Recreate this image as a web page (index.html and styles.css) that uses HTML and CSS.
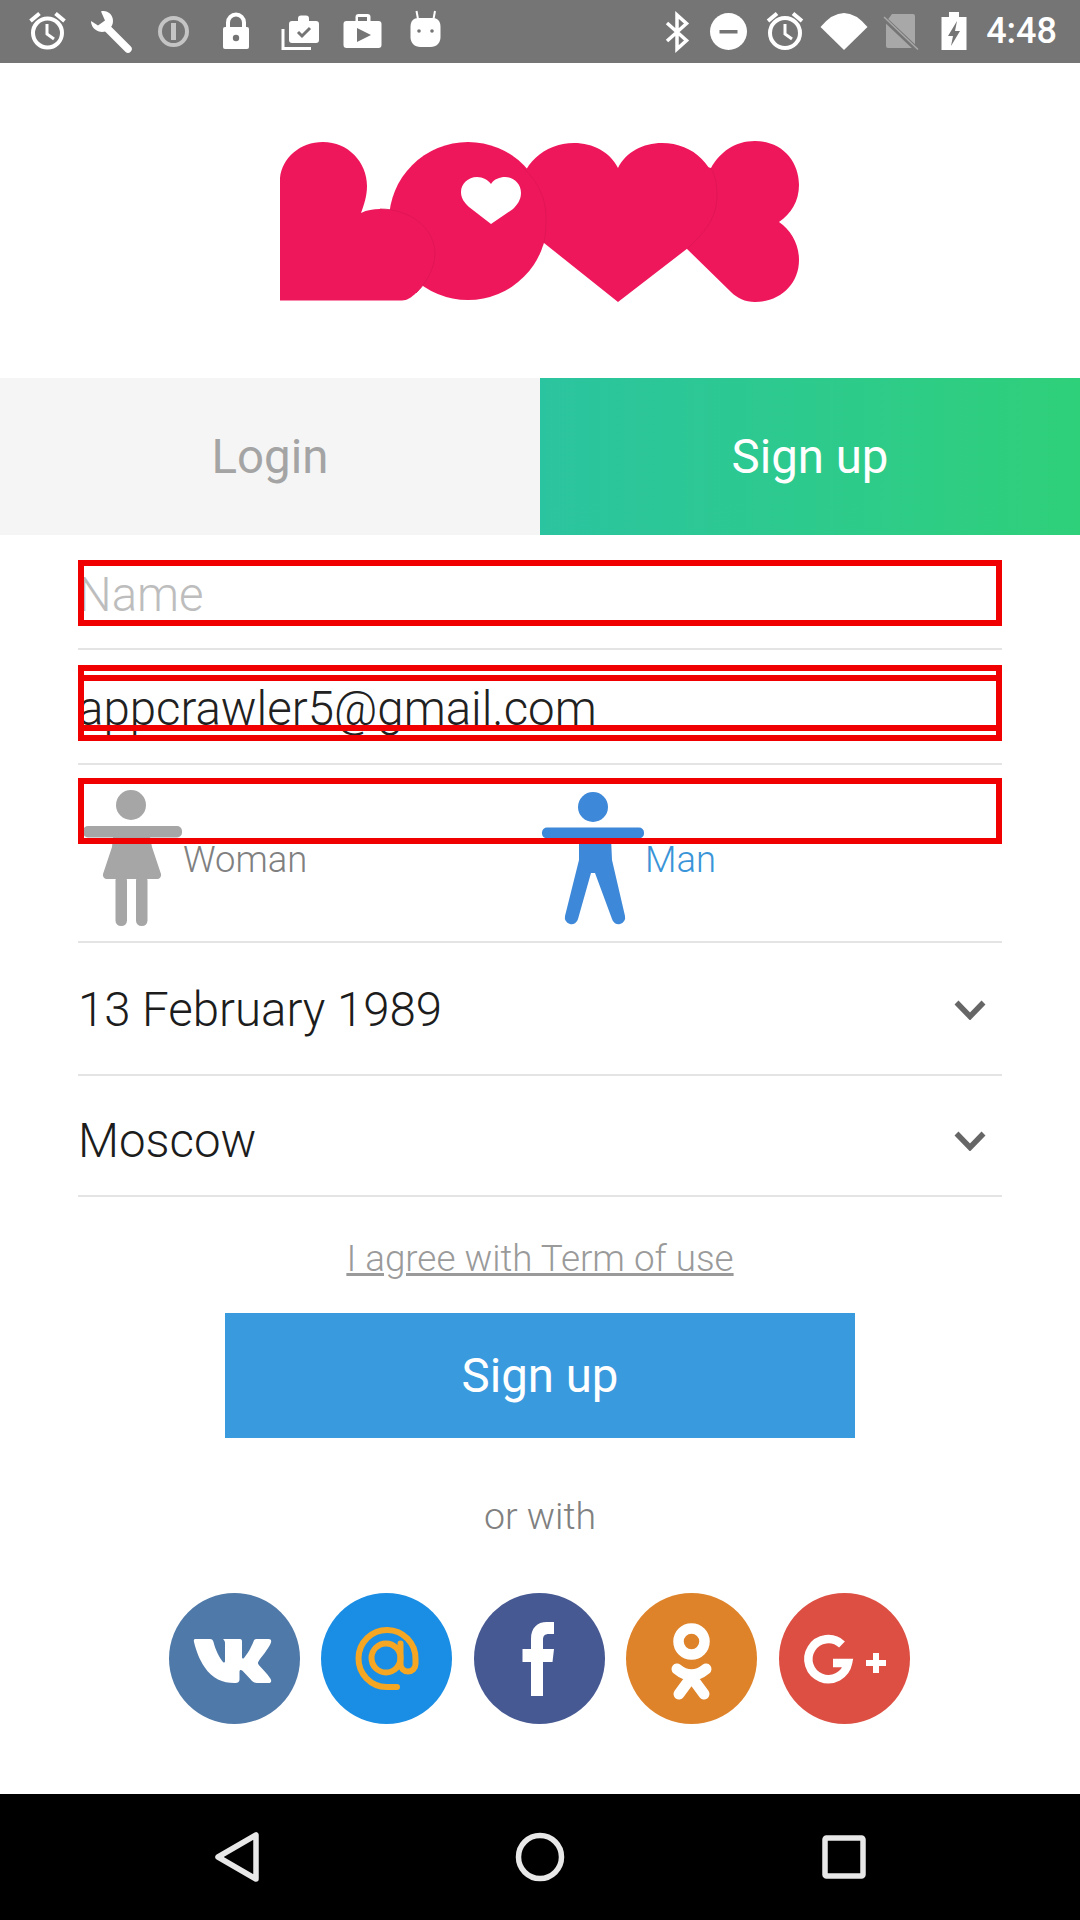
FILE: index.html
```html
<!DOCTYPE html>
<html lang="en">
<head>
<meta charset="utf-8">
<title>Love</title>
<link rel="stylesheet" href="styles.css">
</head>
<body>
<div class="screen">
  <header class="status">
    <div class="status-left">
      <svg width="63" height="63" viewBox="0 0 63 63"><circle cx="31.5" cy="33" r="14.5" class="s-w" stroke-width="4"/><path d="M31 24v10l7 5" class="s-w" stroke-width="3"/><path d="M14.5 21l9-7.500M48.500 21l-9-7.500" class="s-w" stroke-width="4"/></svg>
      <svg width="63" height="63" viewBox="0 0 63 63"><path d="M28 28l21 21" class="s-w" stroke-width="7.500" stroke-linecap="round"/><path d="M22 11.500c6-1.800 12 3 12 9.500c0 7-7 12.500-14 10.500c-5-1.500-8-6-8-10.500l7 4.500l7-5z" class="f-w"/></svg>
      <svg width="63" height="63" viewBox="0 0 63 63"><circle cx="31.5" cy="31.500" r="13.500" class="s-d" stroke-width="4"/><path d="M31.500 23v17" class="s-d" stroke-width="5"/></svg>
      <svg width="63" height="63" viewBox="0 0 63 63"><rect x="18" y="27" width="26" height="22" rx="2" class="f-w"/><path d="M23 29v-6.500a8 8 0 0 1 16 0v6.500" class="s-w" stroke-width="4"/><circle cx="31" cy="38" r="3.200" class="f-g"/></svg>
      <svg width="63" height="63" viewBox="0 0 63 63"><path d="M15 29v19.500h28" class="s-w" stroke-width="3"/><path d="M21 24a3 3 0 0 1 3-3h6v-2.500a3 3 0 0 1 3-3h5a3 3 0 0 1 3 3V21h7a3 3 0 0 1 3 3v16a3 3 0 0 1-3 3H24a3 3 0 0 1-3-3z" class="f-w"/><path d="M30 32l4 4l8-8" class="s-g" stroke-width="3"/></svg>
      <svg width="63" height="63" viewBox="0 0 63 63"><path d="M12.500 24a3 3 0 0 1 3-3h9v-4a3 3 0 0 1 3-3h9a3 3 0 0 1 3 3v4h8a3 3 0 0 1 3 3v21a3 3 0 0 1-3 3h-32a3 3 0 0 1-3-3z" class="f-w"/><path d="M27 17h9v4h-9z" class="f-g"/><path d="M26 28l14 7l-14 7z" class="f-g"/></svg>
      <svg width="63" height="63" viewBox="0 0 63 63"><path d="M22.500 11l1.500 8M41 11l-1.500 8" class="s-w" stroke-width="2"/><path d="M16.500 27c0-6 3-9 8-9h14c5 0 8 3 8 9v10c0 6-4 10-10 10h-10c-6 0-10-4-10-10z" class="f-w"/><circle cx="25" cy="31" r="1.800" class="f-g"/><circle cx="38" cy="31" r="1.800" class="f-g"/></svg>
    </div>
    <div class="status-right">
      <svg width="52" height="63" viewBox="-26 0 52 63"><path d="M-10 23L9.500 40.500L0 49V15L9.500 23.500L-10 41" class="s-w" stroke-width="3.500"/></svg>
      <svg width="51" height="63" viewBox="-25.500 0 51 63"><circle cx="0" cy="31.500" r="18.500" class="f-w"/><rect x="-9" y="30" width="18" height="3.500" class="f-g"/></svg>
      <svg width="62" height="63" viewBox="-31 0 62 63"><circle cx="0" cy="33" r="15" class="s-w" stroke-width="4"/><path d="M0 24v10l7 5" class="s-w" stroke-width="3"/><path d="M-17 21l9-7.500M17 21l-9-7.500" class="s-w" stroke-width="4"/></svg>
      <svg width="56" height="63" viewBox="-28 0 56 63"><path d="M-23.500 27Q0-1 23.500 27L0 50Z" class="f-w"/></svg>
      <svg width="56" height="63" viewBox="-28 0 56 63"><path d="M-14 22v24a2 2 0 0 0 2 2h27v-32a2 2 0 0 0-2-2h-21z" class="f-d2"/><path d="M-17.500 17L17.500 50" stroke="#757575" stroke-width="5" fill="none"/><path d="M-16 17L18 49.500" class="s-d2" stroke-width="1.500"/></svg>
      <svg width="52" height="63" viewBox="-26 0 52 63"><path d="M-5 12h10v5h7.500v33h-25v-33H-5z" class="f-w"/><path d="M3 21l-9 15h5l-2 10l9-15h-5z" class="f-g"/></svg>
      <span class="clock">4:48</span>
    </div>
  </header>

  <main class="main">
    <div class="logo-wrap">
      <svg class="logo" width="530" height="170" viewBox="275 138 530 170" aria-label="Love logo">
        <g class="logo-shape">
          <path d="M755 141C782 141 799 161 799 185C799 201 791 214 779 222C791 230 799 244 799 260C799 284 780 302 755 302C745 302 737 298 731 292L686 248L700 165L711 168C720 152 735 141 755 141Z"/>
          <path d="M618 168C626 152 643 143 662 143C694 143 717 167 717 196C717 219 703 234 688 248L618 302L544 243C532 232 520 216 520 194C520 165 544 143 574 143C593 143 610 152 618 168Z"/>
          <circle cx="468" cy="221" r="79"/>
          <path d="M280 300.500L280 178C282 158 300 142 323 142C348 142 367 162 367 186C367 196 364 205 361 213C367 210 373 209 380 209C410 209 435 228 435 254C435 268 425 285 416 293C412 297 407 300.500 402 300.500Z"/>
        </g>
        <path class="logo-heart" d="M491 184C494 179 500 177 505 177C514 177 521 184 521 193C521 200 517 205 513 209L491 224L469 207C465 203 461 199 461 192C461 184 468 177 477 177C483 177 488 180 491 184Z"/>
        <g class="logo-seam">
          <path d="M380 209C410 209 435 228 435 254C435 268 425 285 416 293"/>
          <path d="M520 165C538 180 547 200 546 221C546 230 545 237 544 243"/>
          <path d="M711 168C716 177 717 186 717 196C717 219 703 234 688 248"/>
        </g>
      </svg>
    </div>

    <nav class="tabs">
      <div class="tab tab-off">Login</div>
      <div class="tab tab-on">Sign up</div>
    </nav>

    <section class="form">
      <div class="row row-name">
        <span class="field placeholder">Name</span>
        <span class="mark mark-name"></span>
      </div>
      <div class="row row-mail">
        <span class="field">appcrawler5@gmail.com</span>
        <span class="mark mark-mail-outer"></span>
        <span class="mark mark-mail-inner"></span>
      </div>
      <div class="row row-gender">
        <div class="gender">
          <svg class="person" width="106" height="177" viewBox="0 0 106 177">
            <g class="woman-fill">
              <circle cx="53" cy="40" r="15"/>
              <rect x="5" y="61" width="99" height="11.500" rx="5"/>
              <path d="M35 72h37l2 10l9 27a4 4 0 0 1-4 5H29a4 4 0 0 1-4-5l9-27z"/>
              <rect x="37.500" y="110" width="11.500" height="51" rx="5.500"/>
              <rect x="58" y="110" width="11.500" height="51" rx="5.500"/>
            </g>
          </svg>
          <span class="gender-label label-woman">Woman</span>
        </div>
        <div class="gender">
          <svg class="person" width="106" height="177" viewBox="0 0 106 177">
            <g class="man-fill">
              <circle cx="53" cy="42" r="15"/>
              <rect x="2" y="62.500" width="102" height="11" rx="5"/>
              <path d="M39 73h32l1 22l13 56a6.500 6.500 0 0 1-13 3L55 108h-4L38 154a6.500 6.500 0 0 1-13-3l14-56z"/>
            </g>
          </svg>
          <span class="gender-label label-man">Man</span>
        </div>
        <span class="mark mark-gender"></span>
      </div>
      <div class="row row-date">
        <span class="select-text">13 February 1989</span>
        <svg class="chevron" width="32" height="20" viewBox="0 0 32 20"><path d="M2.500 2.500l13.500 14l13.500-14"/></svg>
      </div>
      <div class="row row-city">
        <span class="select-text">Moscow</span>
        <svg class="chevron" width="32" height="20" viewBox="0 0 32 20"><path d="M2.500 2.500l13.500 14l13.500-14"/></svg>
      </div>
    </section>

    <section class="actions">
      <a class="agree">I agree with Term of use</a>
      <button class="submit">Sign up</button>
      <p class="or">or with</p>
      <div class="social">
        <svg class="circle" viewBox="0 0 131 131"><circle cx="65.500" cy="65.500" r="65.500" fill="#4f79a8"/><path fill="#fff" d="M26 46h15c2 0 3 1 3.500 3c2 8 6 16 9.500 20c1 1 2 .5 2-1V50c0-2-1-3-2-4h17c1.500 0 2 1 2 2.500V64c0 1.500 1 2 2 1c3-3.500 7-10 9.500-16.500c.5-1.500 1.500-2.500 3-2.500h12c2.500 0 3 1.500 2.500 3.500c-2 6-11 16-12.500 19c-1 1.500-.5 2.500 .5 3.800c3 3.500 8 8 11.500 13.500c1.500 2.500 .5 4.200-2 4.200H88c-3 0-4.500-1.500-6.500-3.800l-8-8.500c-1.500-1.200-3-1-3 1V86c0 2.800-1 4-5 4c-12 0-22-4-30-16c-5-7.500-8-15-10.500-25c-.5-2 0-3 1.500-3z"/></svg>
        <svg class="circle" viewBox="0 0 131 131"><circle cx="65.500" cy="65.500" r="65.500" fill="#1a8ee4"/><g fill="none" stroke="#f5a623" stroke-width="6" stroke-linecap="round"><circle cx="65" cy="65" r="14.500"/><path d="M79.500 50.500V71a7.500 7.500 0 0 0 15 0V66A28.500 28.500 0 1 0 65.500 94H76"/></g></svg>
        <svg class="circle" viewBox="0 0 131 131"><circle cx="65.500" cy="65.500" r="65.500" fill="#475993"/><path fill="#fff" d="M57 103V69H48.500V56H57V46C57 35 63 29 73 29H80V41H75C70.500 41 69 43 69 47V56H80L78.500 69H69V103Z"/></svg>
        <svg class="circle" viewBox="0 0 131 131"><circle cx="65.500" cy="65.500" r="65.500" fill="#de832a"/><g fill="none" stroke="#fff" stroke-linecap="round"><circle cx="65.500" cy="48.500" r="13" stroke-width="10.500"/><path d="M51 76Q65.500 88 80 76M65.500 84L53 101M65.500 84L78 101" stroke-width="11"/></g></svg>
        <svg class="circle" viewBox="0 0 131 131"><circle cx="65.500" cy="65.500" r="65.500" fill="#dd4f43"/><path d="M63 51.500A20 20 0 1 0 69 70H54" fill="none" stroke="#fff" stroke-width="8.500"/><path d="M87 70h20M97 60v20" fill="none" stroke="#fff" stroke-width="6"/></svg>
      </div>
    </section>
  </main>

  <footer class="navbar">
    <svg width="50" height="56" viewBox="0 0 50 56"><path class="nav-icon" d="M45 6v44L7 28z"/></svg>
    <svg width="50" height="56" viewBox="0 0 50 56"><circle class="nav-icon" cx="25" cy="28" r="21.500"/></svg>
    <svg width="50" height="56" viewBox="0 0 50 56"><rect class="nav-icon" x="6" y="9" width="38" height="38" rx="1.500"/></svg>
  </footer>
</div>
</body>
</html>
```

FILE: styles.css
```css
* { box-sizing: border-box; }
html, body { margin: 0; padding: 0; background: #fff; }
body { font-family: Roboto, "Liberation Sans", sans-serif; }
.screen { width: 1080px; height: 1920px; display: flex; flex-direction: column; overflow: hidden; }

.status { height: 63px; flex: none; background: #757575; display: flex; justify-content: space-between; }
.status svg { display: block; flex: none; }
.status-left { display: flex; padding-left: 15.5px; }
.status-right { display: flex; align-items: center; padding-right: 23px; }
.clock { color: #fff; font-size: 36px; font-weight: 500; margin-left: 6px; line-height: 63px; }
.s-w { fill: none; stroke: #fff; }
.f-w { fill: #fff; }
.f-g { fill: #757575; }
.s-g { fill: none; stroke: #757575; }
.s-d { fill: none; stroke: #c4c4c4; }
.f-d2 { fill: #a8a8a8; }
.s-d2 { fill: none; stroke: #a8a8a8; }

.main { flex: 1; display: flex; flex-direction: column; }
.logo-wrap { height: 315px; flex: none; padding: 75px 0 0 275px; }
.logo { display: block; }
.logo-shape { fill: #ef175c; }
.logo-heart { fill: #fff; }
.logo-seam { fill: none; stroke: #dc1554; stroke-width: .8; }

.tabs { display: flex; height: 157px; flex: none; }
.tab { flex: 1; display: flex; align-items: center; justify-content: center; font-size: 47.4px; font-weight: 400; }
.tab-off { background: #f5f5f5; color: #a4a4a4; }
.tab-on { background: linear-gradient(90deg, #2bc4a0, #2fd07a); color: #fff; }

.form { padding: 0 78px; display: flex; flex-direction: column; }
.row { position: relative; display: flex; align-items: center; border-bottom: 2px solid #e4e4e4; }
.row-name { height: 115px; padding-top: 6px; }
.row-mail { height: 115px; padding-top: 4px; }
.row-gender { height: 178px; align-items: flex-start; }
.row-date { height: 133px; padding-top: 2px; justify-content: space-between; }
.row-city { height: 121px; padding-top: 10px; justify-content: space-between; }

.field { font-size: 47.4px; font-weight: 300; color: #212121; line-height: 56px; }
.placeholder { color: #bdbdbd; }

.mark { position: absolute; left: 0; right: 0; border: 6px solid #f00000; }
.mark-name { top: 25px; height: 66px; }
.mark-mail-outer { top: 15px; height: 76px; }
.mark-mail-inner { top: 25px; height: 56px; }
.mark-gender { top: 13px; height: 66px; }

.gender { width: 462px; display: flex; align-items: center; }
.person { display: block; flex: none; }
.woman-fill { fill: #a6a6a6; }
.man-fill { fill: #3d88d8; }
.gender-label { font-size: 36.4px; font-weight: 300; padding-top: 12px; margin-left: -1px; }
.label-woman { color: #808080; }
.label-man { color: #3a94d8; }

.select-text { font-size: 47.4px; font-weight: 300; color: #1c1c1c; }
.chevron { margin-right: 16px; display: block; fill: none; }
.chevron path { fill: none; stroke: #666; stroke-width: 5.5; }

.actions { display: flex; flex-direction: column; align-items: center; }
.agree { font-size: 36.8px; font-weight: 300; color: #9a9a9a; text-decoration: underline; line-height: 42px; margin-top: 41px; }
.submit { width: 630px; height: 125px; margin-top: 33px; border: 0; padding: 0; background: #3a9ade; color: #fff; font: 400 47.4px Roboto, "Liberation Sans", sans-serif; }
.or { font-size: 37.5px; font-weight: 300; color: #808080; line-height: 42px; margin: 57px 0 0; }
.social { display: flex; gap: 21.5px; margin-top: 56px; margin-right: 2px; }
.circle { width: 131px; height: 131px; display: block; }

.navbar { height: 126px; flex: none; background: #000; display: flex; align-items: center; justify-content: space-between; padding: 0 211px; }
.navbar svg { display: block; }
.nav-icon { fill: none; stroke: #e8e8e8; stroke-width: 5.500; stroke-linejoin: round; }
```
